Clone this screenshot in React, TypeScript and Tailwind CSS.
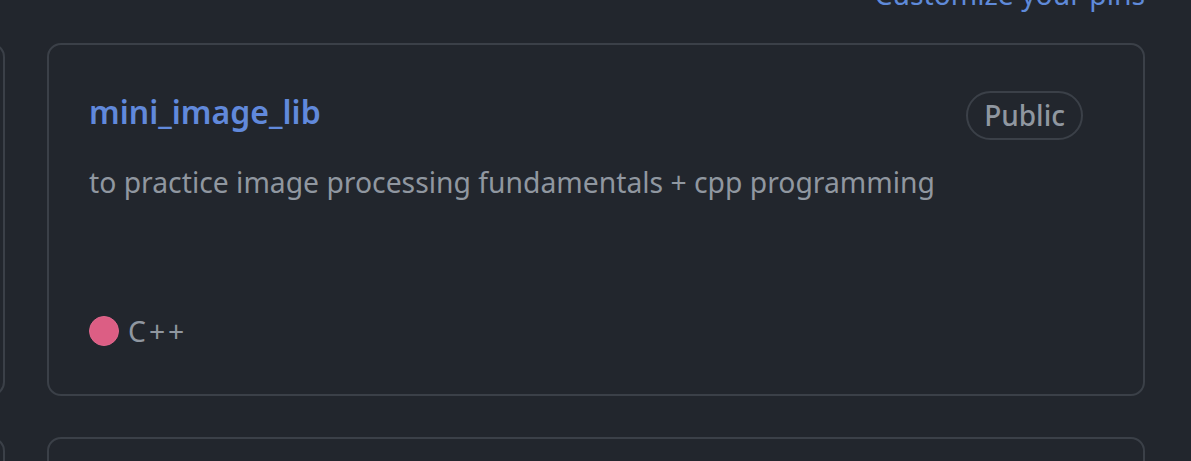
import { useMemo } from "react";

type Pin = { name: string; description: string; language: string; color: string; visibility: string };

const PINS: Pin[] = [
  { name: "mini_image_lib", description: "to practice image processing fundamentals + cpp programming", language: "C++", color: "#f34b7d", visibility: "Public" },
];

const FONT = { fontFamily: '"Noto Sans", "Open Sans", sans-serif' };

function PinCard({ pin }: { pin?: Pin }) {
  return (
    <div className="flex h-[353px] w-[1098px] shrink-0 flex-col rounded-[14px] border-2 border-[#3b4048] px-[40px] pt-[40px] pb-[43px]">
      {pin && (
        <>
          <div className="flex items-start justify-between">
            <a className="mt-[7px] text-[32px] font-semibold leading-[40px] text-[#6189db]">{pin.name}</a>
            <span className="mt-[6px] mr-[20px] rounded-full border-2 border-[#3b4048] px-[16px] text-[28px] font-medium leading-[45px] text-[#9097a0]">
              {pin.visibility}
            </span>
          </div>
          <p className="mt-[22px] text-[28.3px] leading-[40px] text-[#9097a0]">{pin.description}</p>
          <div className="flex-1" />
          <div className="flex items-center gap-[9px] text-[28.3px] leading-[40px] text-[#9097a0]">
            <span className="h-[30px] w-[30px] rounded-full border border-[#e0678d]" style={{ backgroundColor: "#dc5e84" }} />
            <span className="tracking-[3px]">{pin.language}</span>
          </div>
        </>
      )}
    </div>
  );
}

export default function App() {
  const rows = useMemo(() => [[undefined, PINS[0]], [undefined, undefined]] as (Pin | undefined)[][], []);
  return (
    <div className="h-[461px] w-[1191px] overflow-hidden bg-[#22262d]" style={FONT}>
      <div className="-mt-[22px] mr-[46px] text-right text-[28.3px] leading-[32px] text-[#5f8ad9]">Customize your pins</div>
      <div className="mt-[33px] flex flex-col gap-[41px]">
        {rows.map((r, i) => (
          <div key={i} className="-ml-[1093px] flex gap-[42px]">
            {r.map((p, j) => <PinCard key={j} pin={p} />)}
          </div>
        ))}
      </div>
    </div>
  );
}
